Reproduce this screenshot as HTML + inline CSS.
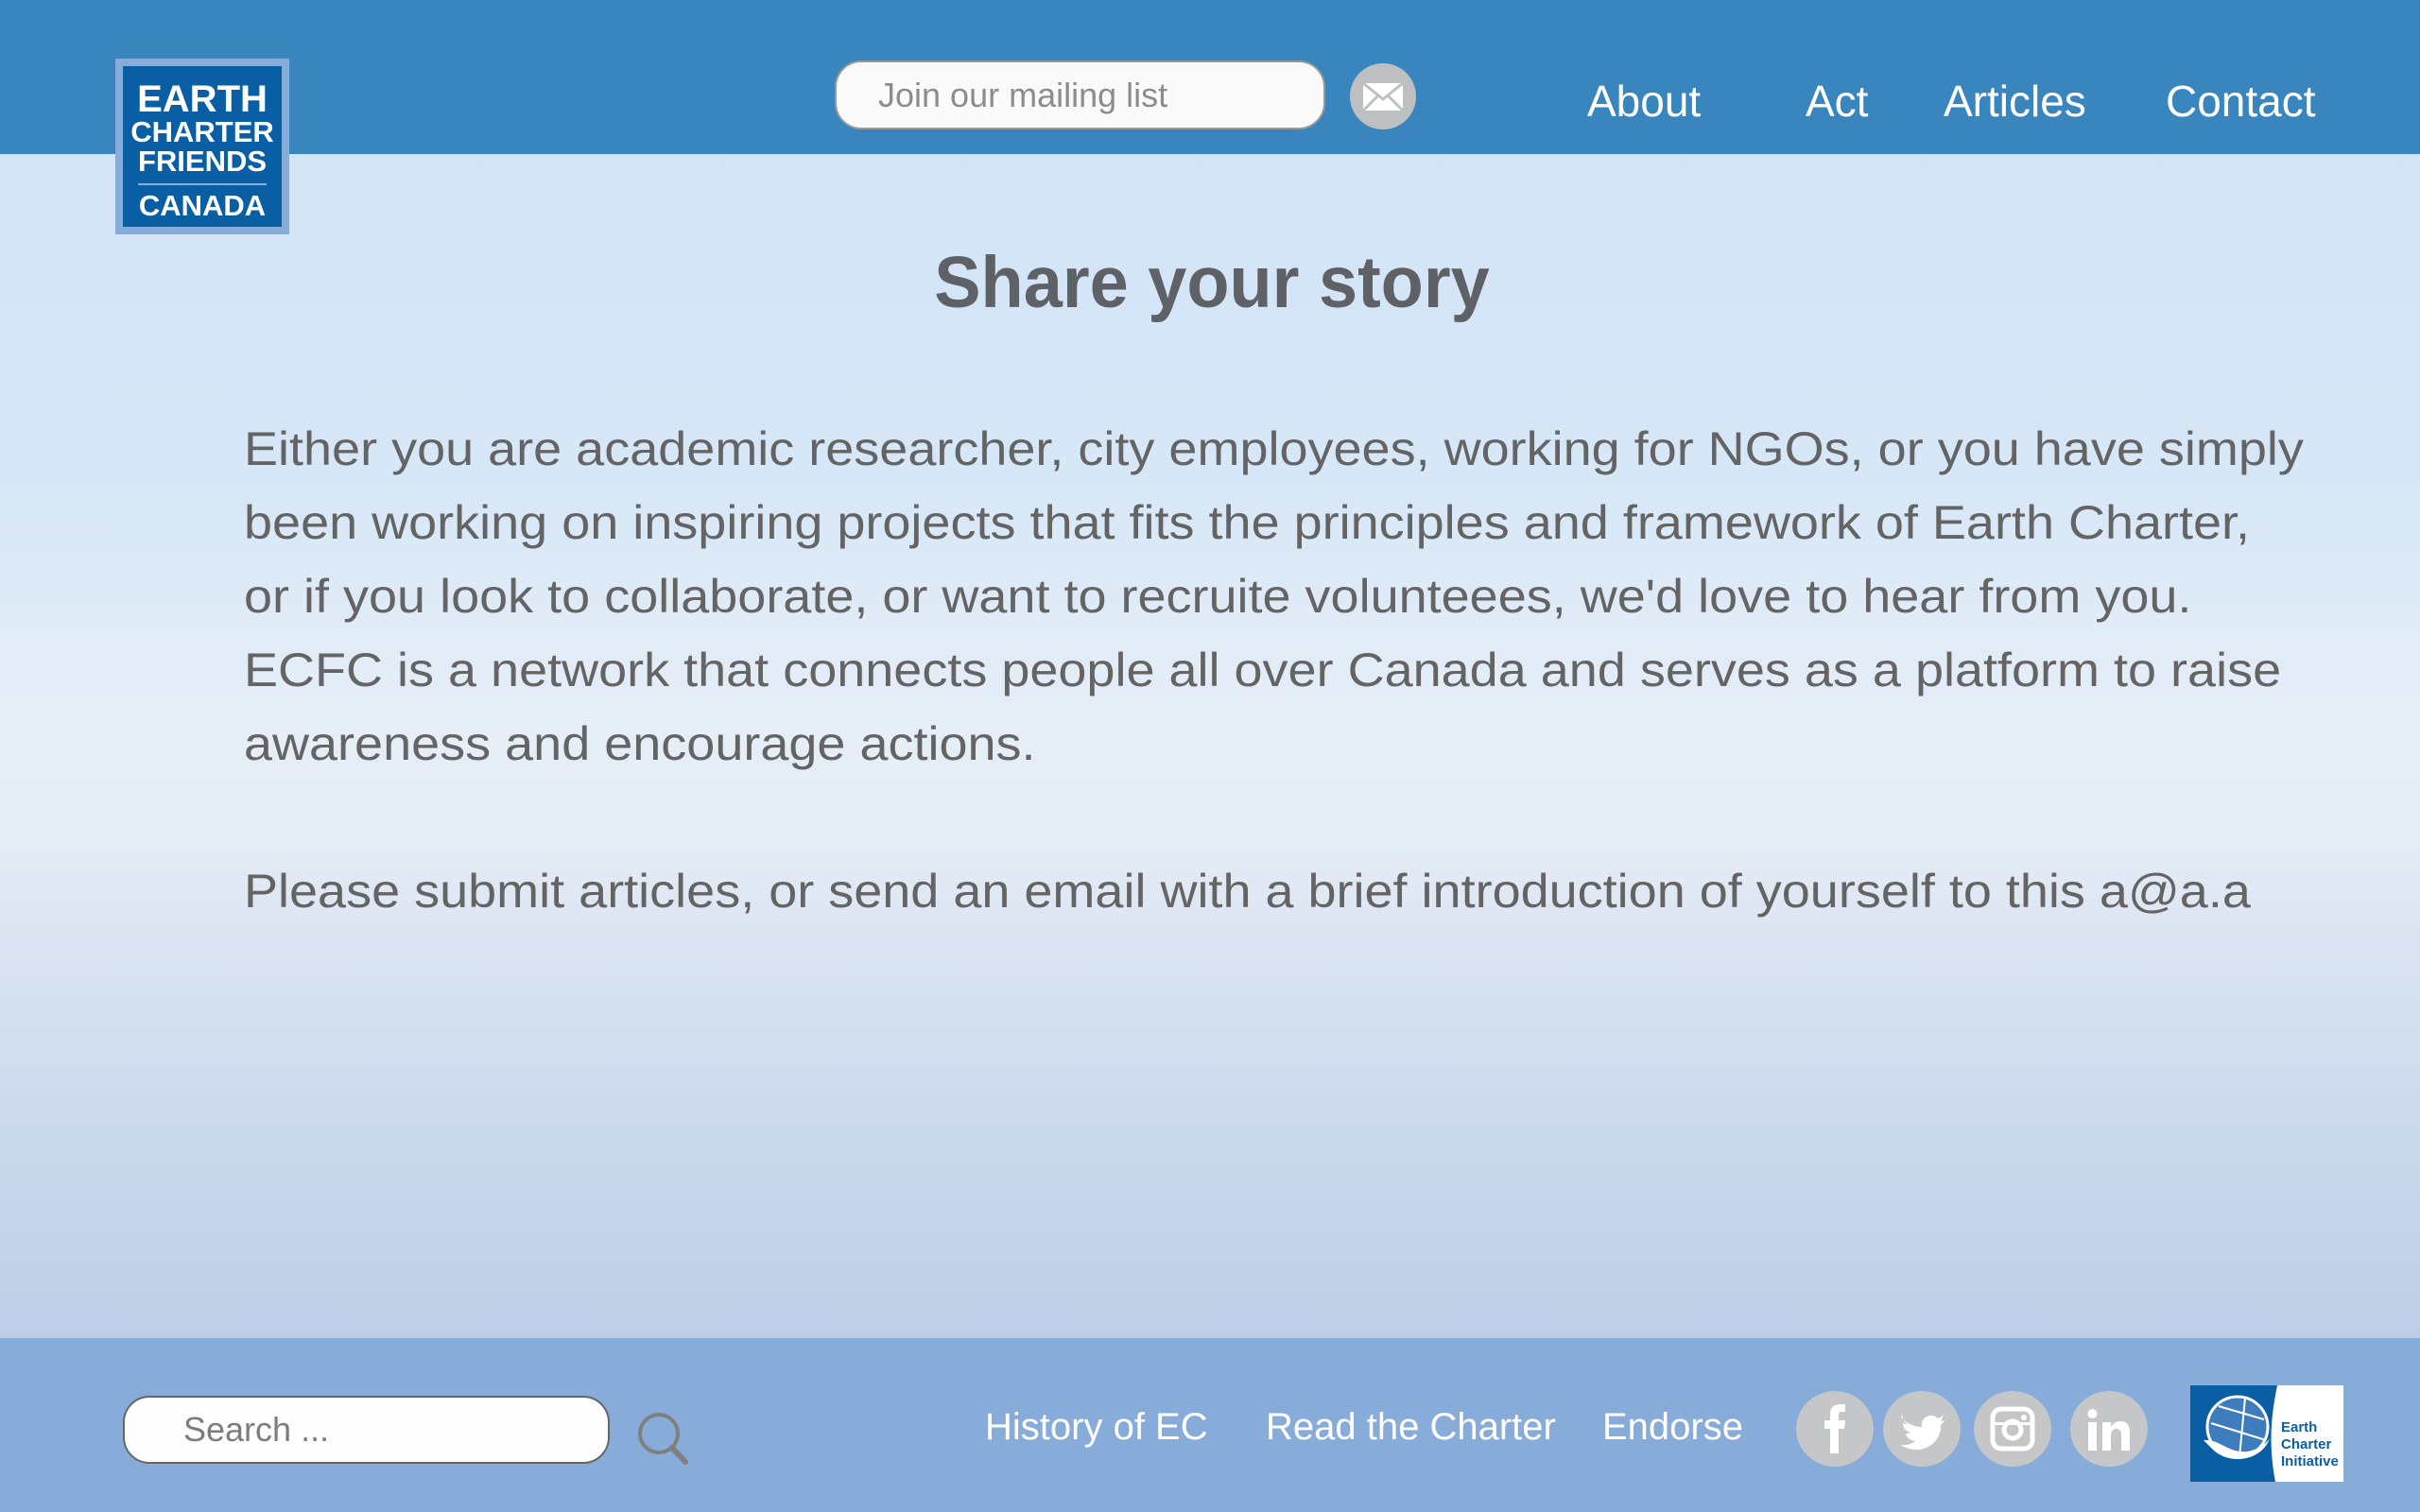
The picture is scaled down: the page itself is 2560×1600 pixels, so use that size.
<!DOCTYPE html>
<html><head><meta charset="utf-8"><style>
*{margin:0;padding:0;box-sizing:border-box}
body{width:2560px;height:1600px;overflow:hidden;font-family:"Liberation Sans",sans-serif;position:relative;
background:linear-gradient(180deg,#cfe2f6 0px,#d6e7f7 500px,#e6eef7 760px,#e3ebf5 900px,#d2deee 1100px,#c4d4e9 1300px,#bccde5 1416px);}
.hdr{position:absolute;left:0;top:0;width:2560px;height:163px;background:#3986bf}
.logo{position:absolute;left:122px;top:62px;width:184px;height:186px;background:#86acd9;padding:8px}
.logo .in{width:100%;height:100%;background:#0a5ea4;color:#fff;font-weight:bold;text-align:center;padding-top:16px}
.logo .l1{font-size:40px;line-height:38px}
.logo .l2{font-size:31px;line-height:31px}
.logo hr{border:0;border-top:2px solid #86acd9;margin:8px 16px 6px}
.mail{position:absolute;left:883px;top:64px;width:519px;height:73px;background:#fafafa;border:2px solid #9a9a9a;border-radius:28px;color:#8c8c8c;font-size:36px;line-height:69px;padding-left:44px}
.env{position:absolute;left:1428px;top:67px;width:70px;height:70px;border-radius:50%;background:#bebfc1}
.nav{position:absolute;top:80px;color:#fff;font-size:46px}
.title{position:absolute;left:0;width:2564px;top:255px;text-align:center;color:#5e6266;font-weight:bold;font-size:77px;transform:scaleX(.96)}
.txt{position:absolute;left:258px;color:#646464;font-size:50px;white-space:nowrap;transform-origin:left top;transform:scaleX(1.08);line-height:78px}
.ftr{position:absolute;left:0;top:1416px;width:2560px;height:184px;background:#87acd9}
.srch{position:absolute;left:130px;top:1477px;width:515px;height:72px;background:#fdfdfd;border:2px solid #666;border-radius:28px;color:#7d7d7d;font-size:36px;line-height:68px;padding-left:62px}
.fl{position:absolute;top:1488px;color:#fff;font-size:40px}
.soc{position:absolute;top:1472px;width:82px;height:80px;border-radius:50%;background:#c5c6c8}
</style></head><body>
<div class="hdr"></div>
<div class="logo"><div class="in"><div class="l1">EARTH</div><div class="l2">CHARTER</div><div class="l2">FRIENDS</div><hr><div class="l2">CANADA</div></div></div>
<div class="mail">Join our mailing list</div>
<div class="env"><svg width="70" height="70" viewBox="0 0 70 70"><rect x="14" y="21" width="42" height="29" fill="#fff"/><path d="M14 21 L35 38 L56 21 M14 50 L29 35 M56 50 L41 35" stroke="#bebfc1" stroke-width="3" fill="none"/></svg></div>
<div class="nav" style="left:1679px">About</div>
<div class="nav" style="left:1910px">Act</div>
<div class="nav" style="left:2056px">Articles</div>
<div class="nav" style="left:2291px">Contact</div>
<div class="title">Share your story</div>
<div class="txt" style="top:436px">Either you are academic researcher, city employees, working for NGOs, or you have simply<br>been working on inspiring projects that fits the principles and framework of Earth Charter,<br>or if you look to collaborate, or want to recruite volunteees, we'd love to hear from you.<br>ECFC is a network that connects people all over Canada and serves as a platform to raise<br>awareness and encourage actions.</div>
<div class="txt" style="top:904px">Please submit articles, or send an email with a brief introduction of yourself to this a@a.a</div>
<div class="ftr"></div>
<div class="srch">Search ...</div>
<svg style="position:absolute;left:670px;top:1490px" width="64" height="62" viewBox="0 0 64 62"><circle cx="27" cy="27" r="20" stroke="#7f7f7f" stroke-width="4" fill="none"/><path d="M41 42 L55 57" stroke="#7f7f7f" stroke-width="6" stroke-linecap="round"/></svg>
<div class="fl" style="left:1042px">History of EC</div>
<div class="fl" style="left:1339px">Read the Charter</div>
<div class="fl" style="left:1695px">Endorse</div>
<div class="soc" style="left:1900px"><svg width="82" height="80" viewBox="0 0 82 80"><path d="M36 66 V40 H30 V31 H36 V25 C36 17 40 14 47 14 H52 V22 H48 C45 22 45 24 45 26 V31 H52 L51 40 H45 V66 Z" fill="#fff"/></svg></div>
<div class="soc" style="left:1992px"><svg width="82" height="80" viewBox="0 0 82 80"><path d="M19 28 C26 35 33 38 41 38 C40 30 46 25 52 26 C55 26 57 28 58 29 L64 26 L61 32 L65 31 C63 34 62 35 61 36 C62 50 50 62 36 62 C29 62 23 60 18 57 C25 58 30 56 34 53 C28 52 25 49 24 45 C26 45 27 45 29 44 C23 42 21 38 21 34 C23 35 24 35 26 35 C21 32 19 27 21 22 Z" fill="#fff"/></svg></div>
<div class="soc" style="left:2088px"><svg width="82" height="80" viewBox="0 0 82 80"><rect x="20" y="19" width="42" height="42" rx="9" stroke="#fff" stroke-width="5" fill="none"/><circle cx="41" cy="41" r="9" stroke="#fff" stroke-width="5" fill="none"/><rect x="20" y="33" width="42" height="3" fill="#fff"/><circle cx="53" cy="28" r="3" fill="#fff"/></svg></div>
<div class="soc" style="left:2190px"><svg width="82" height="80" viewBox="0 0 82 80"><rect x="19" y="33" width="9" height="30" fill="#fff"/><circle cx="23.5" cy="24" r="5" fill="#fff"/><path d="M34 63 V33 H43 V38 C45 34 49 32 53 32 C60 32 63 36 63 44 V63 H54 V46 C54 42 52 40 49 40 C45 40 43 43 43 47 V63 Z" fill="#fff"/></svg></div>
<div style="position:absolute;left:2317px;top:1466px;width:162px;height:102px;background:#fff">
<svg width="162" height="102" viewBox="0 0 162 102"><path d="M0 0 H92 C86 30 82 60 90 102 H0 Z" fill="#0a5ea4"/><circle cx="50" cy="44" r="32" fill="#3d7dbd" stroke="#fff" stroke-width="3"/><path d="M22 40 L80 58 M30 22 L78 36 M58 13 L52 76" stroke="#fff" stroke-width="2"/><path d="M14 58 C30 56 40 72 60 70 C72 68 80 62 84 56 C76 80 40 86 22 66 Z" fill="#fff"/></svg>
<div style="position:absolute;left:96px;top:36px;color:#0a5ea4;font-size:15px;font-weight:bold;line-height:18px">Earth<br>Charter<br>Initiative</div></div>
</body></html>
